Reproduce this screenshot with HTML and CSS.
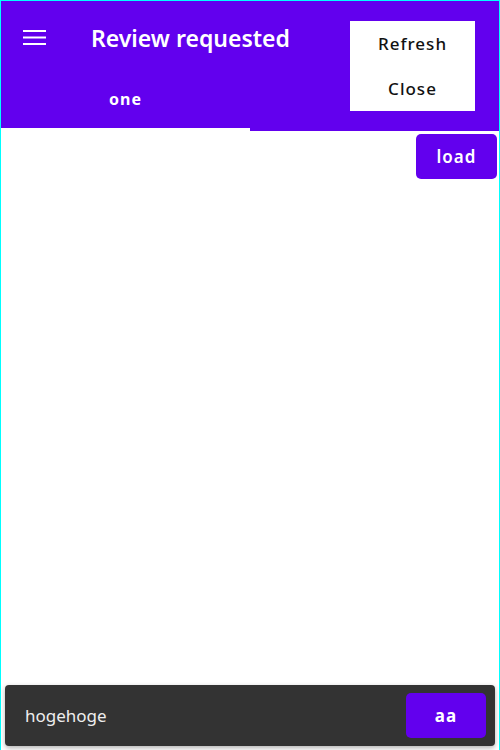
FILE: index.html
```html
<!DOCTYPE html>
<html lang="en">
<head>
  <meta charset="UTF-8">
  <title>Review requested</title>
  <link rel="stylesheet" href="styles.css">
</head>
<body>

<div class="app">
  <div class="appbar">
    <div class="toolbar">
      <button class="menu-btn" aria-label="Menu">
        <svg width="24" height="18" viewBox="0 0 24 18">
          <rect x="0" y="1" width="23" height="2" fill="#fff"></rect>
          <rect x="0" y="7.5" width="23" height="2" fill="#fff"></rect>
          <rect x="0" y="14" width="23" height="2" fill="#fff"></rect>
        </svg>
      </button>
      <span class="title">Review requested</span>
    </div>
    <div class="tabs">
      <div class="tab active">one</div>
      <div class="tab"></div>
    </div>

    <!-- overflow menu, opened -->
    <div class="popup">
      <div class="popup-item">Refresh</div>
      <div class="popup-item">Close</div>
    </div>
  </div>

  <div class="content">
    <div class="actions">
      <button class="load-btn">load</button>
    </div>
  </div>

  <div class="snackbar">
    <span class="snack-text">hogehoge</span>
    <button class="snack-btn">aa</button>
  </div>
</div>

</body>
</html>
```

FILE: styles.css
```css
body {
  margin: 0;
  font-family: "Noto Sans", "Open Sans", sans-serif;
}
.app {
  position: relative;
  height: 750px;
  border: 1px solid #00ffff;
  border-bottom: none;
  box-sizing: border-box;
  display: flex;
  flex-direction: column;
  background: #fff;
}
.appbar {
  position: relative;
  background-color: #6200ee;
  color: white;
}
.toolbar {
  display: flex;
  align-items: center;
  height: 74px;
}
.menu-btn {
  background: none;
  border: none;
  padding: 0;
  margin-left: 22px;
  width: 24px;
  height: 18px;
  display: flex;
  cursor: pointer;
}
.title {
  margin-left: 44px;
  font-size: 23px;
  font-weight: 600;
}
.tabs {
  display: flex;
  height: 56px;
}
.tab {
  flex: 1;
  display: flex;
  align-items: center;
  justify-content: center;
  font-size: 16px;
  font-weight: 700;
  letter-spacing: 1px;
  padding-bottom: 6px;
  box-sizing: border-box;
}
.tab.active {
  border-bottom: 3px solid #fff;
}
.popup {
  position: absolute;
  top: 20px;
  right: 24px;
  width: 125px;
  background: white;
}
.popup-item {
  height: 45px;
  display: flex;
  align-items: center;
  justify-content: center;
  color: #111;
  font-size: 17px;
  font-weight: 500;
  letter-spacing: 1px;
}
.content {
  flex: 1;
}
.actions {
  display: flex;
  justify-content: flex-end;
  padding: 3px 2px 0 0;
}
.load-btn {
  width: 81px;
  height: 45px;
  border: none;
  border-radius: 5px;
  background: #6200ee;
  color: white;
  font-family: inherit;
  font-size: 17px;
  font-weight: 600;
  letter-spacing: 1px;
  cursor: pointer;
}
.snackbar {
  position: absolute;
  left: 4px;
  right: 4px;
  bottom: 4px;
  height: 61px;
  display: flex;
  align-items: center;
  justify-content: space-between;
  padding: 0 9px 0 20px;
  background: #333;
  border-radius: 4px;
  box-shadow: 0 2px 5px rgba(0,0,0,0.3);
}
.snack-text {
  color: #eee;
  font-size: 17px;
}
.snack-btn {
  width: 80px;
  height: 45px;
  border: none;
  border-radius: 5px;
  background: #6200ee;
  color: white;
  font-family: inherit;
  font-size: 17px;
  font-weight: 700;
  letter-spacing: 1px;
  cursor: pointer;
}
```
